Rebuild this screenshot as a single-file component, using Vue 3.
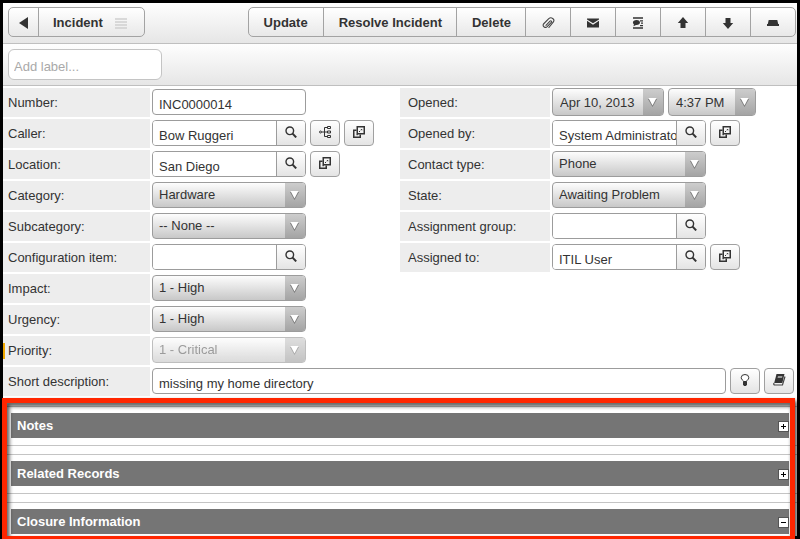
<script setup>
import { ref } from 'vue'

const labelText = ref('')

const leftFields = [
  { id: 'number', label: 'Number:', type: 'text', value: 'INC0000014' },
  { id: 'caller', label: 'Caller:', type: 'lookup', value: 'Bow Ruggeri', actions: ['tree', 'popup'] },
  { id: 'location', label: 'Location:', type: 'lookup', value: 'San Diego', actions: ['popup'] },
  { id: 'category', label: 'Category:', type: 'select', value: 'Hardware' },
  { id: 'subcategory', label: 'Subcategory:', type: 'select', value: '-- None --' },
  { id: 'ci', label: 'Configuration item:', type: 'lookup', value: '', actions: [] },
  { id: 'impact', label: 'Impact:', type: 'select', value: '1 - High' },
  { id: 'urgency', label: 'Urgency:', type: 'select', value: '1 - High' },
  { id: 'priority', label: 'Priority:', type: 'select', value: '1 - Critical', disabled: true }
]

const rightFields = [
  { id: 'opened', label: 'Opened:', type: 'datetime', date: 'Apr 10, 2013', time: '4:37 PM' },
  { id: 'opened-by', label: 'Opened by:', type: 'lookup', value: 'System Administrator', actions: ['popup'] },
  { id: 'contact-type', label: 'Contact type:', type: 'select', value: 'Phone' },
  { id: 'state', label: 'State:', type: 'select', value: 'Awaiting Problem' },
  { id: 'group', label: 'Assignment group:', type: 'lookup', value: '', actions: [] },
  { id: 'assigned', label: 'Assigned to:', type: 'lookup', value: 'ITIL User', actions: ['popup'] }
]

const columns = [
  { name: 'left', fields: leftFields },
  { name: 'right', fields: rightFields }
]

const actionNames = { tree: 'Show related', popup: 'Open record' }

const sections = ref([
  { title: 'Notes', open: false },
  { title: 'Related Records', open: false },
  { title: 'Closure Information', open: true }
])
</script>

<template>
  <div class="frame">
    <main class="page">
      <header class="bar toolbar">
        <div class="group">
          <button class="tool back" type="button" aria-label="Back">
            <svg width="10" height="12" viewBox="0 0 10 12"><path d="M9 0v12L0 6z" fill="#333" /></svg>
          </button>
          <button class="tool title" type="button">
            Incident
            <svg width="12" height="11" viewBox="0 0 12 11"><path d="M0 1h12M0 4h12M0 7h12M0 10h12" stroke="#d0d0d0" stroke-width="1.400" /></svg>
          </button>
        </div>
        <div class="group">
          <button class="tool wider" type="button">Update</button>
          <button class="tool" type="button">Resolve Incident</button>
          <button class="tool" type="button">Delete</button>
          <button class="tool icon" type="button" aria-label="Attachments">
            <svg width="13" height="12" viewBox="0 0 13 12" fill="none" stroke="#444" stroke-width="1.100" stroke-linecap="round" stroke-linejoin="round">
              <path d="M4 8.300 8 4.200c1-1 2.200.2 1.300 1.200L5.200 9.700C3.500 11.400.1 9.600 1.500 7L6.800 1.700c2.400-2.200 6.400.4 4.600 3.200L6.900 10.500" />
            </svg>
          </button>
          <button class="tool icon" type="button" aria-label="Email">
            <svg width="12" height="10" viewBox="0 0 12 10" fill="#333"><path d="M0 .5h12v1L6 5.300 0 1.500zM0 2.800l6 3.900 6-3.900V9.500H0z" /></svg>
          </button>
          <button class="tool icon" type="button" aria-label="Activity">
            <svg width="12" height="12" viewBox="0 0 12 12">
              <path d="M1 1h10M1 11h10M8 3.800h3M9 6.200h2M8 8.600h3" stroke="#333" stroke-width="1.300" />
              <path d="M4.500 3C7 3 8 4.300 8 5.600 8 7.200 6.300 8.200 4 8L1.500 9.200 1.900 7.300C-.4 5.500 1.600 3 4.500 3z" fill="#333" />
            </svg>
          </button>
          <button class="tool icon" type="button" aria-label="Previous record">
            <svg width="12" height="12" viewBox="0 0 12 12"><path d="M6 0l5.200 6H8.500v5h-5V6H.8z" fill="#333" /></svg>
          </button>
          <button class="tool icon" type="button" aria-label="Next record">
            <svg width="12" height="12" viewBox="0 0 12 12"><path d="M6 12L.8 6h2.700V1h5v5h2.700z" fill="#333" /></svg>
          </button>
          <button class="tool icon" type="button" aria-label="Back to top">
            <svg width="14" height="8" viewBox="0 0 14 8"><path d="M2.700 1h8.600l.9 4H13v2H1V5h.8z" fill="#333" /></svg>
          </button>
        </div>
      </header>

      <div class="bar labels">
        <input v-model="labelText" class="add-label" type="text" placeholder="Add label..." aria-label="Add label" />
      </div>

      <form class="form" @submit.prevent>
        <div v-for="col in columns" :key="col.name" class="column" :class="col.name">
          <div v-for="f in col.fields" :key="f.id" class="field">
            <label :for="f.id" :class="{ changed: f.disabled }">{{ f.label }}</label>

            <div v-if="f.type === 'text'" class="controls">
              <input :id="f.id" class="box" type="text" :value="f.value" />
            </div>

            <div v-else-if="f.type === 'lookup'" class="controls">
              <div class="lookup">
                <input :id="f.id" type="text" :value="f.value" />
                <button type="button" aria-label="Look up">
                  <svg width="12" height="12" viewBox="0 0 12 12" fill="none" stroke="#333">
                    <circle cx="4.800" cy="4.800" r="3.800" stroke-width="1.400" /><path d="M7.600 7.600l3.600 3.800" stroke-width="2" />
                  </svg>
                </button>
              </div>
              <button v-for="a in f.actions" :key="a" class="square" type="button" :aria-label="actionNames[a]">
                <svg v-if="a === 'tree'" width="12" height="12" viewBox="0 0 12 12" fill="none" stroke="#333">
                  <circle cx="1.500" cy="6" r="1" /><path d="M2.500 6H9M8.500 1.500h-3v9h3" />
                  <path d="M8.500 .5h3v2h-3zM8.500 5h3v2h-3zM8.500 9.500h3v2h-3z" />
                </svg>
                <svg v-else width="12" height="12" viewBox="0 0 12 12" fill="none" stroke="#333" stroke-width="1.500">
                  <path d="M4.250 .75h7v7h-7z" /><path d="M3.500 4.250H.75v7h6.500V8.500" /><path d="M3.500 8.700h1.500" stroke-width="1" />
                  <path d="M6 6l1.200-1.200" stroke-width="1" /><path d="M7.500 3h1.700v1.700z" fill="#333" stroke="none" />
                </svg>
              </button>
            </div>

            <div v-else-if="f.type === 'select'" class="controls">
              <div class="drop" :class="{ disabled: f.disabled }">
                <select :id="f.id" :disabled="f.disabled"><option>{{ f.value }}</option></select>
                <svg width="9" height="9" viewBox="0 0 9 9"><path d="M0 1h9L4.500 9z" fill="#777" /><path d="M.5 0h8l-4 7.500z" fill="#fff" /></svg>
              </div>
            </div>

            <div v-else class="controls tall">
              <div class="drop date">
                <select :id="f.id"><option>{{ f.date }}</option></select>
                <svg width="9" height="9" viewBox="0 0 9 9"><path d="M0 1h9L4.500 9z" fill="#777" /><path d="M.5 0h8l-4 7.500z" fill="#fff" /></svg>
              </div>
              <div class="drop time">
                <select aria-label="Opened time"><option>{{ f.time }}</option></select>
                <svg width="9" height="9" viewBox="0 0 9 9"><path d="M0 1h9L4.500 9z" fill="#777" /><path d="M.5 0h8l-4 7.500z" fill="#fff" /></svg>
              </div>
            </div>
          </div>
        </div>

        <div class="field wide">
          <label for="short">Short description:</label>
          <div class="controls">
            <input id="short" class="box" type="text" value="missing my home directory" />
            <button class="square" type="button" aria-label="Suggest">
              <svg width="10" height="12" viewBox="0 0 10 12">
                <path d="M3.500 7.500C3.500 6.300 1.200 5.700 1.200 3.700a3.800 3.200 0 0 1 7.600 0C8.800 5.700 6.500 6.300 6.500 7.500z" fill="#fff" stroke="#333" />
                <path d="M3 7.500h4v3L6 12H4l-1-1.500z" fill="#333" />
              </svg>
            </button>
            <button class="square" type="button" aria-label="Search knowledge">
              <svg width="13" height="12" viewBox="0 0 13 12">
                <path d="M3.500 0h8L9.300 9H1.200z" fill="#333" /><path d="M5 2h4.500L9 4H4.500z" fill="#999" />
                <path d="M1 9c-.6 1.500 0 2 1 2h7.500L12 2.500" fill="none" stroke="#444" stroke-width="1.200" />
              </svg>
            </button>
          </div>
        </div>
      </form>

      <div class="sections">
        <section v-for="s in sections" :key="s.title" class="section">
          <h2>
            {{ s.title }}
            <button type="button" :aria-label="'Toggle ' + s.title" :aria-expanded="s.open" @click="s.open = !s.open">
              <svg width="9" height="9" viewBox="0 0 9 9">
                <path :d="s.open ? 'M2 4.500h5' : 'M2 4.500h5M4.500 2v5'" stroke="#000" />
              </svg>
            </button>
          </h2>
        </section>
      </div>
    </main>
  </div>
</template>

<style>
body {
  margin: 0;
  background: #000;
}
</style>

<style scoped>
.frame {
  box-sizing: border-box;
  min-height: 100vh;
  padding: 3px;
  background: #000;
  overflow: hidden;
  font: 13px/16px "Liberation Sans", Arial, sans-serif;
  color: #333;
}
.frame *,
.frame *::after {
  box-sizing: border-box;
}
.page {
  background: #fff;
}
button,
input,
select {
  margin: 0;
  font: inherit;
  color: inherit;
}
svg {
  display: block;
}

.bar {
  display: flex;
  border-bottom: 1px solid #bfbfbf;
  background: linear-gradient(#fefefe, #e6e6e6);
}
.toolbar {
  justify-content: space-between;
  padding: 4px 1px 6px 5px;
}
.group {
  display: flex;
  height: 30px;
  border: 1px solid #a3a3a3;
  border-radius: 5px;
  background: linear-gradient(#fff, #e8e8e8);
}
.tool {
  display: flex;
  align-items: center;
  justify-content: center;
  padding: 2px 14px 0 15px;
  border: 0;
  background: none;
  font-weight: bold;
  white-space: nowrap;
}
.tool + .tool {
  border-left: 1px solid #a3a3a3;
}
.tool.wider {
  padding-right: 15px;
}
.tool.back {
  width: 29px;
  padding: 2px 0 0;
}
.tool.title {
  gap: 12px;
  padding: 2px 17px 0 14px;
}
.tool.icon {
  width: 45px;
  padding: 2px 0 0;
}
.labels {
  padding: 5px;
}
.add-label {
  width: 154px;
  height: 31px;
  padding: 3px 5px 0;
  border: 1px solid #c4c4c4;
  border-radius: 6px;
  background: #fff;
}
.add-label::placeholder {
  color: #a9a9a9;
  opacity: 1;
}

.form {
  display: grid;
  grid-template-columns: 1fr 1fr;
  gap: 2px 0;
  padding-top: 2px;
}
.column {
  display: flex;
  flex-direction: column;
  gap: 2px;
}
.field {
  display: flex;
  gap: 2px;
  height: 29px;
}
.wide {
  grid-column: 1 / -1;
}
label {
  flex: none;
  width: 147px;
  padding: 7px 5px;
  background: #ededed;
}
.right label {
  width: 150px;
  padding: 7px 8px;
}
.changed {
  background: linear-gradient(#f0a800, #f0a800) 0 50% / 2px 16px no-repeat #ededed;
}
.controls {
  display: flex;
  flex: 1;
  align-items: flex-start;
  gap: 4px;
  min-width: 0;
  padding: 1px 3px 0 0;
}
.tall {
  padding: 0;
}
.box,
.lookup,
.drop {
  width: 154px;
  height: 26px;
  border: 1px solid #9c9c9c;
  border-radius: 4px;
  background: #fff;
}
.box {
  padding: 4px 6px 0;
}
.wide .box {
  flex: 1;
}
.lookup {
  display: flex;
  overflow: hidden;
}
.lookup input {
  flex: 1;
  min-width: 0;
  padding: 5px 0 0 6px;
  border: 0;
  background: #fff;
}
.lookup button {
  display: grid;
  place-items: center;
  width: 29px;
  padding: 0 0 2px;
  border: 0;
  border-left: 1px solid #9c9c9c;
  background: linear-gradient(#fff, #e4e4e4);
}
.square {
  display: grid;
  flex: none;
  place-items: center;
  width: 30px;
  height: 26px;
  padding: 0 0 2px;
  border: 1px solid #a0a0a0;
  border-radius: 4px;
  background: linear-gradient(#fff, #e4e4e4);
}
.drop {
  display: grid;
  align-items: center;
  overflow: hidden;
  background: linear-gradient(#fdfdfd, #c8c8c8);
}
.drop select {
  grid-area: 1 / 1;
  width: 100%;
  height: 100%;
  padding: 0 20px 0 6px;
  border: 0;
  appearance: none;
  background: linear-gradient(#cdcdcd, #a4a4a4) right / 20px 100% no-repeat;
}
.drop svg {
  grid-area: 1 / 1;
  justify-self: end;
  margin-right: 6px;
  pointer-events: none;
}
.drop.disabled {
  opacity: 0.65;
}
.drop.disabled select {
  color: #666;
  opacity: 1;
}
.tall .drop {
  height: 28px;
}
.tall .drop select {
  padding: 2px 20px 0 7px;
}
.drop.date {
  width: 112px;
}
.drop.time {
  width: 88px;
}

.sections {
  position: relative;
  display: grid;
  gap: 8px;
  margin-top: 10px;
}
.sections::after {
  content: "";
  position: absolute;
  inset: -8px 2px -5px -1px;
  border: 5px solid #ff2600;
  filter: drop-shadow(2px 3px 2px rgba(0, 0, 0, 0.75));
  pointer-events: none;
}
.section {
  padding: 6px 8px 7px;
  border: solid #c4c4c4;
  border-width: 1px 0;
}
.section:last-child {
  padding-bottom: 2px;
  border-bottom: 0;
}
h2 {
  display: flex;
  align-items: center;
  justify-content: space-between;
  height: 25px;
  margin: 0;
  padding: 0 0 0 6px;
  background: #757575;
  color: #fff;
  font-size: 13px;
}
h2 button {
  display: grid;
  place-items: center;
  width: 11px;
  height: 11px;
  margin-top: 2px;
  padding: 0;
  border: 1px solid #555;
  background: #fff;
}
</style>
